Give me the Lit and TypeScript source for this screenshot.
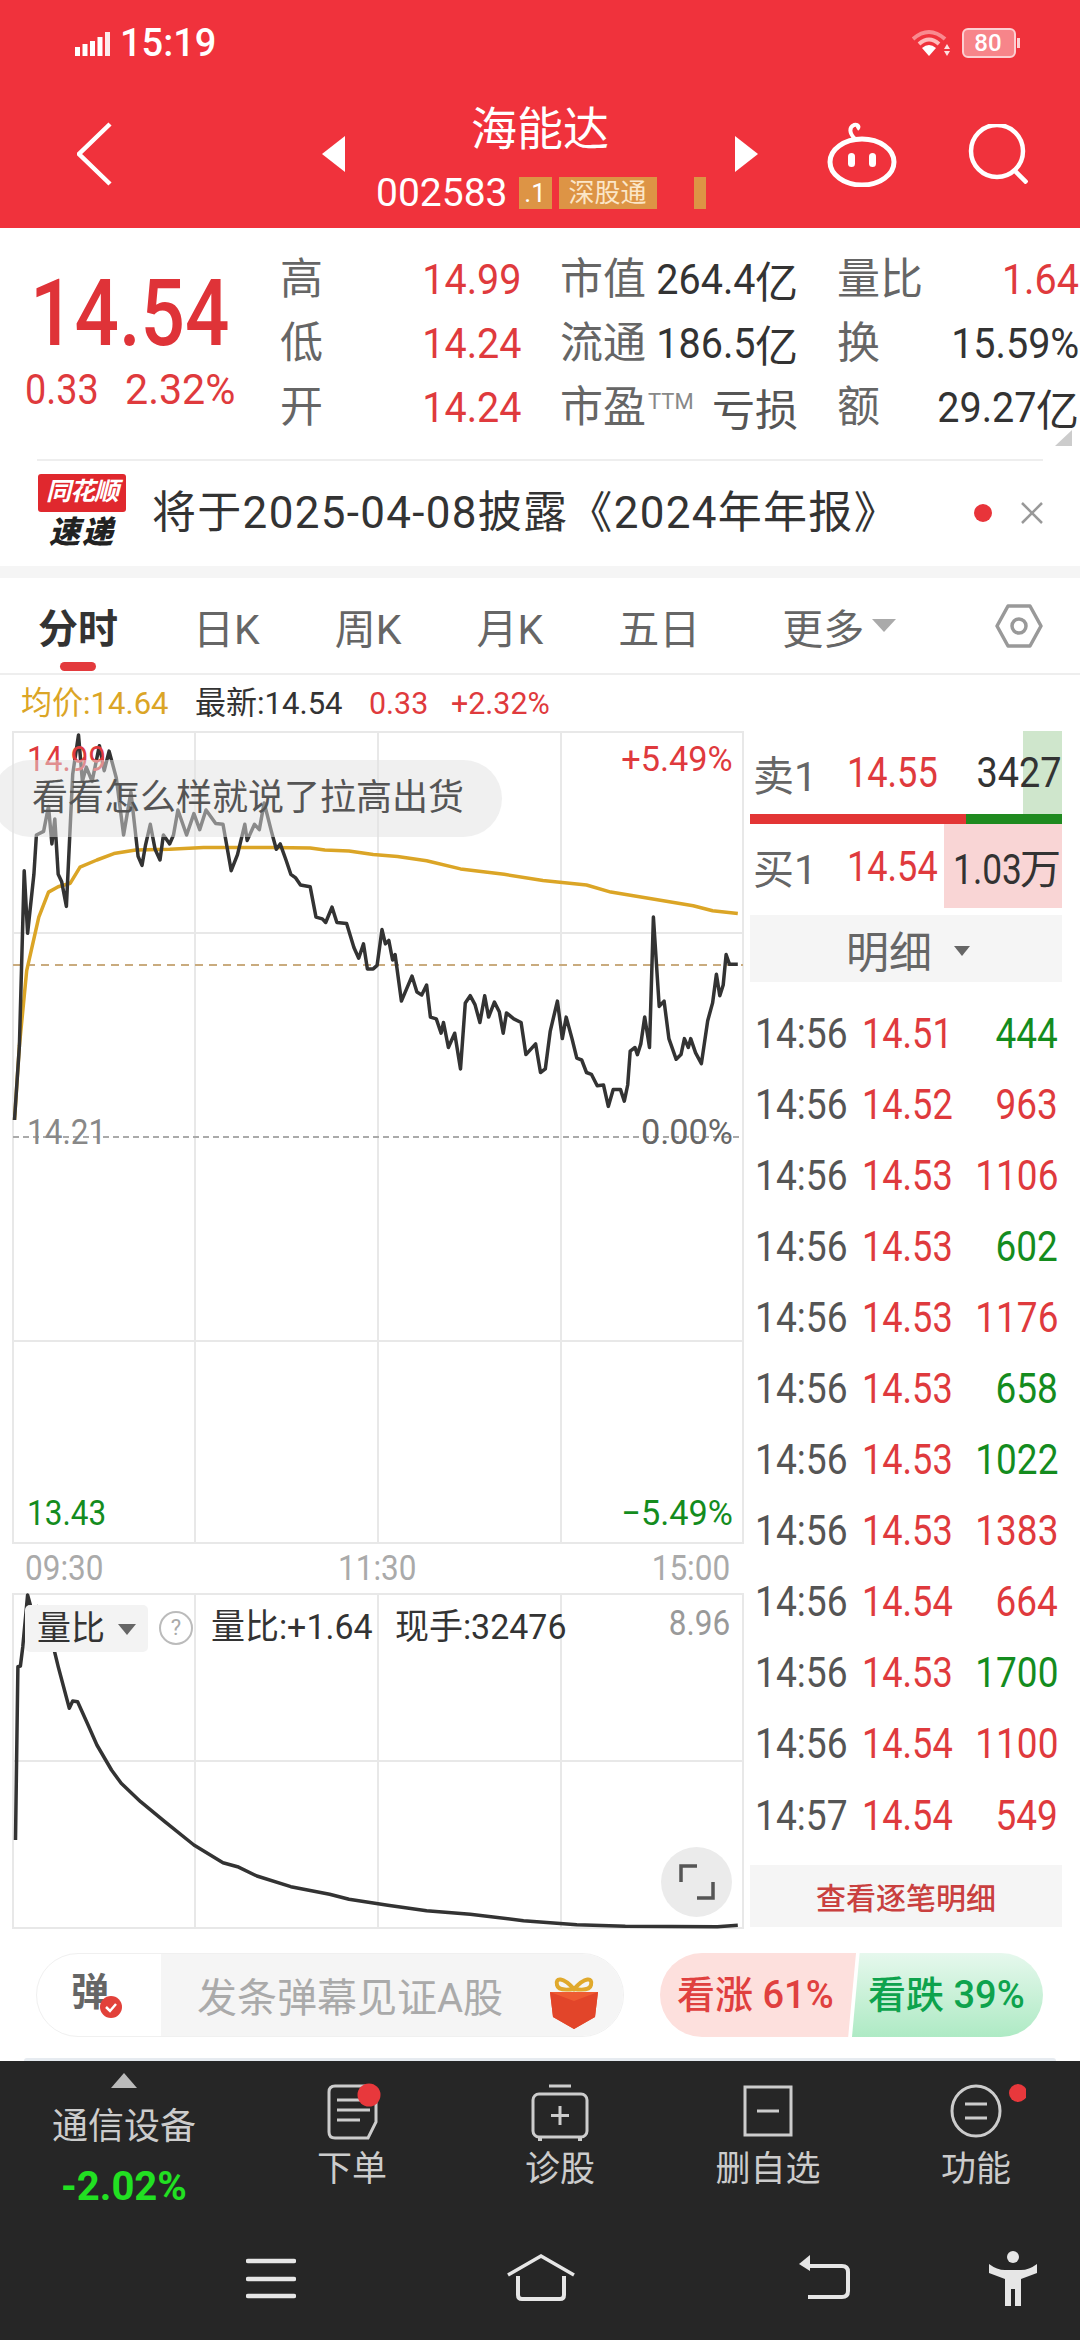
import { LitElement, html, css, svg } from "lit";
import { customElement } from "lit/decorators.js";

const price: number[][] = [[30,1568],[40,1360],[50,870],[57,1045],[70,880],[75,770],[90,760],[100,690],[107,795],[113,725],[120,880],[127,900],[137,970],[150,600],[162,490],[170,620],[178,580],[190,620],[205,520],[215,590],[225,535],[240,610],[255,770],[270,650],[285,830],[293,855],[300,800],[310,740],[320,810],[330,840],[337,770],[350,795],[358,770],[367,700],[385,770],[400,710],[412,755],[425,700],[445,738],[460,740],[477,870],[490,825],[505,740],[510,785],[525,740],[535,755],[545,680],[560,760],[570,810],[578,795],[590,840],[600,880],[610,890],[620,910],[640,915],[652,1000],[665,1005],[672,1015],[685,972],[695,1015],[715,1018],[730,1085],[740,1115],[750,1075],[758,1145],[770,1145],[778,1135],[788,1035],[795,1075],[802,1065],[810,1120],[815,1105],[828,1235],[850,1165],[860,1210],[870,1218],[880,1190],[888,1280],[900,1285],[910,1325],[915,1295],[925,1365],[938,1325],[950,1425],[960,1240],[970,1220],[980,1245],[990,1295],[1000,1220],[1008,1280],[1020,1238],[1030,1265],[1038,1325],[1045,1268],[1060,1285],[1075,1295],[1085,1385],[1105,1355],[1115,1435],[1125,1425],[1135,1320],[1150,1235],[1160,1340],[1168,1280],[1180,1340],[1190,1395],[1200,1400],[1210,1435],[1220,1440],[1232,1472],[1245,1470],[1255,1530],[1265,1483],[1280,1483],[1288,1515],[1295,1470],[1300,1375],[1310,1365],[1315,1385],[1322,1355],[1330,1280],[1340,1365],[1348,1000],[1360,1250],[1370,1235],[1380,1340],[1395,1398],[1405,1385],[1412,1340],[1420,1365],[1425,1340],[1435,1380],[1447,1410],[1460,1290],[1470,1240],[1478,1160],[1485,1220],[1492,1190],[1498,1105],[1505,1132],[1522,1132]];
const avg: number[][] = [[30,1568],[40,1360],[55,1150],[65,1090],[80,1000],[100,930],[120,915],[145,905],[165,860],[200,840],[235,822],[280,812],[350,810],[420,805],[560,805],[640,806],[670,812],[720,815],[770,825],[820,830],[880,842],[950,865],[1040,880],[1120,897],[1210,910],[1260,930],[1350,950],[1430,968],[1470,982],[1522,990]];
const ratio: number[][] = [[32,1020],[37,500],[42,498],[47,440],[57,285],[68,345],[78,320],[90,340],[105,410],[120,500],[143,625],[150,603],[160,605],[180,670],[200,735],[230,810],[250,850],[290,905],[340,965],[400,1035],[460,1088],[490,1100],[530,1128],[600,1160],[680,1183],[720,1198],[800,1216],[880,1232],[970,1243],[1080,1262],[1190,1274],[1290,1279],[1480,1280],[1522,1276]];

const mapA = (p: number[][]) => p.map(([x, y]) => `${(x / 2.063).toFixed(1)},${(560 + y / 2.8).toFixed(1)}`).join(" ");
const mapB = (p: number[][]) => p.map(([x, y]) => `${(x / 2.063).toFixed(1)},${(1500 + y / 3).toFixed(1)}`).join(" ");

const trades: [string, string, string, boolean][] = [
  ["14:56", "14.51", "444", false], ["14:56", "14.52", "963", true], ["14:56", "14.53", "1106", true],
  ["14:56", "14.53", "602", false], ["14:56", "14.53", "1176", true], ["14:56", "14.53", "658", false],
  ["14:56", "14.53", "1022", false], ["14:56", "14.53", "1383", true], ["14:56", "14.54", "664", true],
  ["14:56", "14.53", "1700", false], ["14:56", "14.54", "1100", true], ["14:57", "14.54", "549", true],
];

@customElement("app-root")
export class AppRoot extends LitElement {
  static styles = css`
    :host { display: block; width: 1080px; height: 2340px; overflow: hidden; position: relative; background: #fff;
      font-family: Roboto, "Noto Sans CJK SC", sans-serif; color: #333; }
    .n { display: inline-block; transform: scaleX(.9); transform-origin: left center; white-space: nowrap; }
    .nr { display: inline-block; transform: scaleX(.9); transform-origin: right center; white-space: nowrap; }
    .red { color: #df3a3d; } .grn { color: #148c1e; } .gray { color: #666; }

    header { height: 228px; background: #f0323c; color: #fff; display: flex; flex-direction: column; }
    .status { height: 80px; display: flex; align-items: center; padding: 5px 60px 0 75px; box-sizing: border-box; }
    .time { font-size: 38px; font-weight: 500; margin-left: 10px; line-height: 1; }
    .status .sp { flex: 1; }
    .batt { position: relative; width: 58px; height: 30px; margin-left: 10px; }
    .batt span { position: absolute; inset: 0; width: 52px; text-align: center; font-size: 24px; font-weight: 500; line-height: 30px; }
    .nav { display: flex; align-items: center; height: 148px; padding-left: 77px; }
    .nav svg { flex: none; display: block; }
    .tri-l { margin-left: 210px; }
    .tri-r { margin-right: 69px; }
    .srch { margin-left: 71px; }
    .mid { width: 390px; height: 148px; display: flex; flex-direction: column; align-items: center; padding-top: 19px; box-sizing: border-box; }
    .title { font-size: 46px; line-height: 60px; height: 60px; }
    .code { align-self: flex-start; margin-left: 31px; margin-top: 14px; display: flex; align-items: center; height: 40px; font-size: 39px; }
    .tag { background: #dd9445; color: #fbe6c8; font-size: 26px; height: 32px; line-height: 32px; text-align: center; }
    .t1 { width: 33px; margin-left: 11px; color: #fff; }
    .t2 { width: 98px; margin-left: 7px; }
    .t3 { width: 12px; margin-left: 37px; }

    .quote { height: 231px; box-sizing: border-box; padding-top: 19px; display: flex; position: relative; }
    .qleft { width: 280px; flex: none; padding-left: 30px; box-sizing: border-box; }
    .big { font-size: 92px; font-weight: 500; color: #df3338; line-height: 92px; height: 92px; margin-top: 21px; display: block; }
    .big .n { transform: scaleX(.85); }
    .sub { font-size: 42px; color: #df3a3d; line-height: 60px; margin-left: -5px; margin-top: 0; display: flex; }
    .sub .b { margin-left: 18px; transform: scaleX(.98); }
    .grid { display: grid; grid-template-columns: 241px 238px 242px; column-gap: 39px; grid-auto-rows: 64px; font-size: 42px; }
    .cell { display: flex; justify-content: space-between; align-items: center; white-space: nowrap; }
    .lab { color: #666; font-size: 43px; line-height: 64px; }
    .val { color: #333; display: flex; align-items: center; }
    .val.red { color: #df3a3d; }
    .val .nr { transform: scaleX(.94); }
    .val .cn { font-size: 43px; }
    .tm { font-size: 22px; color: #888; align-self: flex-start; margin: 14px 0 0 2px; }
    .ks { flex: 1; display: flex; align-items: center; }
    .kui { color: #555; font-size: 43px; }
    .corner { position: absolute; right: 8px; bottom: 13px; width: 0; height: 0; border-left: 17px solid transparent; border-bottom: 16px solid #ccc; }
    .news { margin: 0 37px; border-top: 2px solid #eee; height: 100px; padding-top: 5px; display: flex; align-items: center; box-sizing: border-box; }
    .logo { width: 90px; flex: none; display: flex; flex-direction: column; align-items: center; height: 78px; }
    .lg1 { background: #e0282e; color: #fff; font-size: 25px; font-weight: 700; font-style: italic; width: 88px; height: 38px; line-height: 36px; text-align: center; border-radius: 3px; white-space: nowrap; letter-spacing: -1px; }
    .lg2 { font-size: 31px; line-height: 36px; font-weight: 900; font-style: italic; color: #222; margin-top: 3px; letter-spacing: 2px; }
    .ntxt { margin-left: 25px; font-size: 44px; letter-spacing: 1.3px; color: #333; white-space: nowrap; flex: 1; line-height: 60px; }
    .dot { width: 18px; height: 18px; border-radius: 50%; background: #e8343a; flex: none; margin-right: 28px; }
    .x { flex: none; display: block; margin-right: -1px; }
    .band { margin-top: 7px; height: 12px; background: #f5f5f5; }
    .tabs { height: 97px; box-sizing: border-box; border-bottom: 2px solid #eee; display: flex; align-items: center; padding-left: 38px; gap: 75px; font-size: 41px; color: #666; position: relative; }
    .tabs .on { font-weight: 700; color: #333; font-size: 40px; position: relative; }
    .tabs .on::after { content: ""; position: absolute; left: 22px; width: 36px; height: 9px; border-radius: 5px; background: #e33a3d; bottom: -16px; }
    .more { display: flex; align-items: center; margin-left: 7px; gap: 8px; }
    .more i { width: 0; height: 0; border-left: 12px solid transparent; border-right: 12px solid transparent; border-top: 13px solid #aaa; }
    .hex { position: absolute; left: 995px; top: 24px; }
    .stats { height: 56px; display: flex; align-items: center; padding-left: 21px; font-size: 32px; line-height: 1; white-space: nowrap; }
    .st1 { color: #dba526; width: 174px; } .st2 { color: #333; width: 174px; } .st3 { width: 82px; color: #df3a3d; } .st4 { color: #df3a3d; }
    .st1 .n, .st2 .n { transform: scaleX(.97); }
    .st3 .n, .st4 .n { transform: scaleX(.95); }

    .main { height: 1199px; display: flex; }
    .chart { width: 750px; flex: none; position: relative; height: 1199px; }
    .chart svg { position: absolute; left: 0; top: 0; display: block; }
    .lb { position: absolute; font-size: 35px; line-height: 40px; white-space: nowrap; }
    .lb .nr.w { transform: scaleX(.98); }
    .a-hi { left: 27px; top: 9px; color: #df3a3d; }
    .a-up { right: 17px; top: 9px; color: #df3a3d; text-align: right; }
    .a-mid { left: 27px; top: 382px; color: #888; }
    .a-zero { right: 17px; top: 382px; color: #666; text-align: right; }
    .a-lo { left: 27px; top: 763px; color: #148c1e; }
    .a-dn { right: 17px; top: 763px; color: #148c1e; text-align: right; }
    .a-t1 { left: 25px; top: 818px; color: #aaa; }
    .a-t2 { left: 338px; top: 818px; color: #aaa; }
    .a-t3 { right: 20px; top: 818px; color: #aaa; text-align: right; }
    .a-max { right: 20px; top: 873px; color: #999; text-align: right; }
    .bubble { position: absolute; left: -8px; top: 29px; width: 510px; height: 77px; border-radius: 39px; background: rgba(226,226,226,.5); color: #555; font-size: 36px; line-height: 77px; padding-left: 40px; box-sizing: border-box; white-space: nowrap; }
    .sel { position: absolute; left: 25px; top: 874px; width: 123px; height: 47px; background: #f3f3f3; border-radius: 5px; font-size: 34px; line-height: 47px; padding-left: 12px; box-sizing: border-box; color: #333; }
    .sel i { position: absolute; left: 93px; top: 19px; width: 0; height: 0; border-left: 9px solid transparent; border-right: 9px solid transparent; border-top: 11px solid #666; }
    .qm { position: absolute; left: 159px; top: 880px; width: 34px; height: 34px; border-radius: 50%; border: 2px solid #bbb; box-sizing: border-box; color: #aaa; font-size: 22px; line-height: 30px; text-align: center; }
    .rinfo { position: absolute; left: 211px; top: 877px; font-size: 35px; line-height: 40px; white-space: nowrap; color: #333; }
    .rinfo2 { left: 395px; }
    .rinfo .n { transform: scaleX(.97); }
    .full { position: absolute; left: 661px; top: 1116px; width: 71px; height: 70px; border-radius: 50%; background: #ebebeb; display: flex; align-items: center; justify-content: center; }
    .full svg { position: static; }

    .panel { width: 312px; flex: none; display: flex; flex-direction: column; font-size: 42px; }
    .bk { display: flex; align-items: center; position: relative; white-space: nowrap; }
    .sell { height: 83px; }
    .buy { height: 84px; }
    .bk .fill-s { position: absolute; right: 0; top: 0; bottom: 0; width: 39px; background: #cfe6cc; }
    .bk .fill-b { position: absolute; right: 0; top: 0; bottom: 0; width: 118px; background: #f9d5d5; }
    .bk .k { position: relative; width: 97px; padding-left: 3px; box-sizing: border-box; color: #666; font-size: 41px; }
    .bk .p { position: relative; width: 90px; color: #df3a3d; }
    .bk .p .n { transform: scaleX(.86); }
    .bk .v { position: relative; flex: 1; text-align: right; color: #333; padding-right: 1px; }
    .bk .v .nr { transform: scaleX(.9); }
    .bk .wan { font-size: 41px; margin-left: -2px; }
    .bk .low .nr { transform: scaleX(.84); }
    .split { display: flex; height: 10px; flex: none; }
    .split b { width: 216px; background: #e33535; }
    .split u { flex: 1; background: #1f8a1f; }
    .detail { margin-top: 7px; height: 67px; background: #f5f5f5; display: flex; align-items: center; justify-content: center; color: #666; font-size: 43px; gap: 22px; padding-left: 4px; box-sizing: border-box; }
    .detail i { width: 0; height: 0; border-left: 8px solid transparent; border-right: 8px solid transparent; border-top: 10px solid #666; margin-top: 4px; }
    .list { margin-top: 16px; }
    .row { height: 71.05px; display: flex; align-items: center; white-space: nowrap; padding: 0 4px 0 5px; }
    .row .tt { width: 107px; color: #555; }
    .row .tt .n { transform: scaleX(.885); }
    .row .pp { width: 92px; color: #df3a3d; }
    .row .pp .n { transform: scaleX(.86); }
    .row .vv { flex: 1; text-align: right; }
    .row .vv .nr { transform: scaleX(.88); }
    .allbtn { margin-top: 14px; height: 62px; background: #f5f5f5; color: #c9403f; font-size: 30px; font-weight: 500; display: flex; align-items: center; justify-content: center; }

    .bar { height: 131px; padding: 23px 37px 0 36px; box-sizing: border-box; display: flex; position: relative; }
    .pill { width: 588px; height: 84px; border-radius: 42px; border: 1px solid #f0f0f0; box-sizing: border-box; overflow: hidden; display: flex; flex: none; }
    .dan { width: 124px; flex: none; position: relative; font-size: 38px; font-weight: 700; color: #666; line-height: 76px; padding-left: 34px; box-sizing: border-box; }
    .dan i { position: absolute; left: 63px; top: 42px; width: 22px; height: 22px; border-radius: 50%; background: #e2413a; }
    .dan svg { position: absolute; left: 63px; top: 42px; }
    .inp { flex: 1; background: #f5f5f5; display: flex; align-items: center; padding-left: 36px; color: #aaa; font-size: 40px; white-space: nowrap; position: relative; }
    .inp svg { position: absolute; left: 388px; top: 21px; }
    .vote { margin-left: 36px; width: 383px; height: 84px; border-radius: 42px; overflow: hidden; display: flex; font-size: 38px; font-weight: 500; white-space: nowrap; }
    .vup { width: 196px; flex: none; background: #fde0dd; color: #e0403f; line-height: 84px; padding-left: 17px; box-sizing: border-box; clip-path: polygon(0 0, 100% 0, 96% 100%, 0 100%); }
    .vdn { flex: 1; margin-left: -4px; background: linear-gradient(#e6f8ed, #aeeac4); color: #0ea34d; line-height: 84px; padding-left: 16px; clip-path: polygon(4% 0, 100% 0, 100% 100%, 0 100%); }
    .rule { position: absolute; left: 24px; right: 24px; bottom: 0; height: 3px; background: #e6ebf0; border-radius: 3px 3px 0 0; }

    footer { height: 279px; background: #262626; color: #ccc; display: flex; flex-direction: column; }
    .ftop { height: 175px; display: grid; grid-template-columns: 248px repeat(4, 208px); }
    .fl { display: flex; flex-direction: column; align-items: center; position: relative; }
    .fl i { margin-top: 12px; width: 0; height: 0; border-left: 13px solid transparent; border-right: 13px solid transparent; border-bottom: 15px solid #bbb; }
    .fl .nm { margin-top: 16px; font-size: 36px; line-height: 46px; white-space: nowrap; }
    .fl .ch { margin-top: 14px; font-size: 40px; font-weight: 700; line-height: 46px; color: #22e022; }
    .it { display: flex; flex-direction: column; align-items: center; padding-top: 20px; }
    .it svg { display: block; }
    .it span { font-size: 35px; line-height: 50px; margin-top: 4px; white-space: nowrap; }
    .fnav { padding: 15px 0 0 246px; display: flex; align-items: flex-start; }
    .fnav svg { display: block; flex: none; }
    .m1 { margin-left: 210px; } .m2 { margin-left: 222px; } .m3 { margin-left: 139px; }
  `;

  render() {
    const n = (t: string) => html`<span class="n">${t}</span>`;
    const r = (t: string) => html`<span class="nr">${t}</span>`;
    const rw = (t: string) => html`<span class="nr w">${t}</span>`;
    return html`
      <header>
        <div class="status">
          <svg width="35" height="26" viewBox="0 0 35 26"><g fill="#fff"><rect x="0" y="17" width="5" height="9"/><rect x="7.500" y="14" width="5" height="12"/><rect x="15" y="11" width="5" height="15"/><rect x="22.500" y="7" width="5" height="19"/><rect x="30" y="2" width="5" height="24" opacity=".9"/></g></svg>
          <span class="time">15:19</span>
          <span class="sp"></span>
          <svg width="40" height="28" viewBox="0 0 40 28"><path d="M1 10 Q17 -4 33 10" stroke="#f98a8f" stroke-width="4" fill="none"/><path d="M7 15 Q17 6 27 15" stroke="#fbb" stroke-width="4" fill="none"/><path d="M17 27 L10 19 Q17 13 24 19Z" fill="#fff"/><path d="M35 15l3 5h-6zM35 27l3-5h-6z" fill="#fde0e0"/></svg>
          <div class="batt">
            <svg width="58" height="30" viewBox="0 0 58 30"><rect x="1" y="1" width="52" height="28" rx="5" fill="#f7858a" stroke="#fcd0d2" stroke-width="2"/><rect x="55" y="10" width="3" height="10" fill="#fcd0d2"/></svg>
            <span>80</span>
          </div>
        </div>
        <div class="nav">
          <svg width="35" height="64" viewBox="0 0 35 64"><path d="M33 2 L2 32 L33 62" fill="none" stroke="#fff" stroke-width="4.500"/></svg>
          <svg class="tri-l" width="23" height="36" viewBox="0 0 23 36"><path d="M23 0V36L0 18Z" fill="#fff"/></svg>
          <div class="mid">
            <div class="title">海能达</div>
            <div class="code"><span>002583</span><span class="tag t1">.1</span><span class="tag t2">深股通</span><span class="tag t3"></span></div>
          </div>
          <svg class="tri-r" width="23" height="36" viewBox="0 0 23 36"><path d="M0 0V36L23 18Z" fill="#fff"/></svg>
          <svg width="70" height="66" viewBox="0 0 70 66"><path d="M28 18 C22 12 22 6 27 4 C31 3 33 6 30 8" fill="none" stroke="#fff" stroke-width="4"/><ellipse cx="35" cy="41" rx="32" ry="23" fill="none" stroke="#fff" stroke-width="5"/><rect x="21" y="32" width="7" height="14" rx="3.500" fill="#fff"/><rect x="42" y="32" width="7" height="14" rx="3.500" fill="#fff"/></svg>
          <svg class="srch" width="60" height="60" viewBox="0 0 60 60"><circle cx="29" cy="27" r="26" fill="none" stroke="#fff" stroke-width="4.500"/><path d="M46 46 L59 59" stroke="#fff" stroke-width="4.500"/></svg>
        </div>
      </header>

      <section class="quote">
        <div class="qleft">
          <div class="big">${n("14.54")}</div>
          <div class="sub">${n("0.33")}<span class="n b">2.32%</span></div>
        </div>
        <div class="grid">
          <div class="cell"><span class="lab">高</span><span class="val red">${r("14.99")}</span></div>
          <div class="cell"><span class="lab">市值</span><span class="val">${r("264.4")}<span class="cn">亿</span></span></div>
          <div class="cell"><span class="lab">量比</span><span class="val red">${r("1.64")}</span></div>
          <div class="cell"><span class="lab">低</span><span class="val red">${r("14.24")}</span></div>
          <div class="cell"><span class="lab">流通</span><span class="val">${r("186.5")}<span class="cn">亿</span></span></div>
          <div class="cell"><span class="lab">换</span><span class="val">${r("15.59%")}</span></div>
          <div class="cell"><span class="lab">开</span><span class="val red">${r("14.24")}</span></div>
          <div class="cell"><span class="ks"><span class="lab">市盈</span><span class="tm">TTM</span></span><span class="kui">亏损</span></div>
          <div class="cell"><span class="lab">额</span><span class="val">${r("29.27")}<span class="cn">亿</span></span></div>
        </div>
        <span class="corner"></span>
      </section>

      <section class="news">
        <div class="logo"><div class="lg1">同花顺</div><div class="lg2">速递</div></div>
        <div class="ntxt">将于2025-04-08披露《2024年年报》</div>
        <span class="dot"></span>
        <svg class="x" width="24" height="24" viewBox="0 0 24 24"><path d="M2 2 L22 22 M22 2 L2 22" stroke="#999" stroke-width="2.500"/></svg>
      </section>
      <div class="band"></div>

      <nav class="tabs">
        <span class="on">分时</span><span>日K</span><span>周K</span><span>月K</span><span>五日</span>
        <span class="more">更多<i></i></span>
        <svg class="hex" width="48" height="48" viewBox="0 0 48 48"><path d="M13 4 H35 L46 24 L35 44 H13 L2 24Z" fill="none" stroke="#999" stroke-width="3.500" stroke-linejoin="round"/><circle cx="24" cy="24" r="7" fill="none" stroke="#999" stroke-width="3.500"/></svg>
      </nav>
      <div class="stats">
        <span class="st1">${n("均价:14.64")}</span><span class="st2">${n("最新:14.54")}</span><span class="st3">${n("0.33")}</span><span class="st4">${n("+2.32%")}</span>
      </div>

      <div class="main">
        <div class="chart">
          <svg width="750" height="1199" viewBox="0 731 750 1199">
            ${svg`<g fill="none" stroke="#e8e8e8" stroke-width="2">
              <rect x="13" y="732" width="730" height="811"/>
              <path d="M195 732V1543M378 732V1543M561 732V1543M13 933H743M13 1341H743"/>
              <rect x="13" y="1594" width="730" height="334"/>
              <path d="M195 1594V1928M378 1594V1928M561 1594V1928M13 1761H743"/>
            </g>
            <path d="M13 965H743" stroke="#c9ab7e" stroke-width="2" stroke-dasharray="8 6" fill="none"/>
            <path d="M13 1137H743" stroke="#aaa" stroke-width="2" stroke-dasharray="6 4" fill="none"/>
            <polyline points="${mapA(avg)}" fill="none" stroke="#dba526" stroke-width="3.500" stroke-linejoin="round"/>
            <polyline points="${mapA(price)}" fill="none" stroke="#333" stroke-width="3.500" stroke-linejoin="round"/>
            <polyline points="${mapB(ratio)}" fill="none" stroke="#333" stroke-width="3.500" stroke-linejoin="round"/>`}
          </svg>
          <span class="lb a-hi">${n("14.99")}</span>
          <span class="lb a-up">${rw("+5.49%")}</span>
          <span class="lb a-mid">${n("14.21")}</span>
          <span class="lb a-zero">${rw("0.00%")}</span>
          <span class="lb a-lo">${n("13.43")}</span>
          <span class="lb a-dn">${rw("−5.49%")}</span>
          <span class="lb a-t1">${n("09:30")}</span>
          <span class="lb a-t2">${n("11:30")}</span>
          <span class="lb a-t3">${r("15:00")}</span>
          <span class="lb a-max">${r("8.96")}</span>
          <div class="bubble">看看怎么样就说了拉高出货</div>
          <div class="sel">量比<i></i></div>
          <div class="qm">?</div>
          <span class="rinfo">${n("量比:+1.64")}</span>
          <span class="rinfo rinfo2">${n("现手:32476")}</span>
          <div class="full"><svg width="40" height="40" viewBox="0 0 40 40"><path d="M4 20V4H20M36 20V36H20" fill="none" stroke="#555" stroke-width="3.500"/></svg></div>
        </div>
        <div class="panel">
          <div class="bk sell"><span class="fill-s"></span><span class="k">卖1</span><span class="p">${n("14.55")}</span><span class="v">${r("3427")}</span></div>
          <div class="split"><b></b><u></u></div>
          <div class="bk buy"><span class="fill-b"></span><span class="k">买1</span><span class="p">${n("14.54")}</span><span class="v low">${r("1.03")}<span class="wan">万</span></span></div>
          <div class="detail">明细<i></i></div>
          <div class="list">
            ${trades.map(([t, p, v, up]) => html`<div class="row"><span class="tt">${n(t)}</span><span class="pp">${n(p)}</span><span class="vv ${up ? "red" : "grn"}">${r(v)}</span></div>`)}
          </div>
          <div class="allbtn">查看逐笔明细</div>
        </div>
      </div>

      <div class="bar">
        <div class="pill">
          <div class="dan">弹<i></i><svg width="22" height="22" viewBox="0 0 22 22"><path d="M6 11l4 4 6-7" fill="none" stroke="#fff" stroke-width="2.500"/></svg></div>
          <div class="inp">发条弹幕见证A股
            <svg width="50" height="54" viewBox="0 0 50 54"><path d="M25 14 C14 2 6 2 8 10 C9 15 18 15 25 14 C32 15 41 15 42 10 C44 2 36 2 25 14Z" fill="none" stroke="#e0a92c" stroke-width="4"/><path d="M1 17 H49 L46 42 L25 54 L4 42Z" fill="#ee5a32"/><path d="M1 17 L25 26 L49 17 L46 42 L25 54 L4 42Z" fill="#e2452a"/></svg>
          </div>
        </div>
        <div class="vote"><div class="vup">看涨 61%</div><div class="vdn">看跌 39%</div></div>
        <span class="rule"></span>
      </div>

      <footer>
        <div class="ftop">
          <div class="fl"><i></i><span class="nm">通信设备</span><span class="ch">-2.02%</span></div>
          <div class="it">
            <svg width="60" height="60" viewBox="0 0 60 60"><path d="M13 5 H46 Q54 5 54 12 V41 L46 57 H13 Q7 57 7 51 V11 Q7 5 13 5Z" fill="none" stroke="#ccc" stroke-width="3"/><path d="M15 19H44M15 29H48M15 39H38" stroke="#ccc" stroke-width="3"/><circle cx="47" cy="14" r="11.500" fill="#e8383c"/></svg>
            <span>下单</span>
          </div>
          <div class="it">
            <svg width="60" height="60" viewBox="0 0 60 60"><path d="M19 5H41" stroke="#ccc" stroke-width="3"/><rect x="3" y="13" width="54" height="43" rx="6" fill="none" stroke="#ccc" stroke-width="3"/><path d="M30 25V44M21 34.500H39" stroke="#ccc" stroke-width="3"/><path d="M10 57v3M50 57v3" stroke="#ccc" stroke-width="4"/></svg>
            <span>诊股</span>
          </div>
          <div class="it">
            <svg width="60" height="60" viewBox="0 0 60 60"><rect x="7" y="6" width="46" height="48" fill="none" stroke="#ccc" stroke-width="3"/><path d="M19 30H41" stroke="#ccc" stroke-width="3"/></svg>
            <span>删自选</span>
          </div>
          <div class="it">
            <svg width="100" height="60" viewBox="-20 0 100 60"><ellipse cx="30" cy="30" rx="24" ry="25" fill="none" stroke="#ccc" stroke-width="3"/><path d="M19 23H41M19 37H41" stroke="#ccc" stroke-width="3"/><ellipse cx="72" cy="12" rx="9" ry="9" fill="#e8383c"/></svg>
            <span>功能</span>
          </div>
        </div>
        <div class="fnav">
          <svg width="50" height="55" viewBox="0 0 50 55"><path d="M2 10H48M2 28H48M2 45H48" stroke="#e6e6e6" stroke-width="4.500" stroke-linecap="round"/></svg>
          <svg class="m1" width="70" height="55" viewBox="0 0 70 55"><path d="M2 24 L35 5 L68 24" fill="none" stroke="#e6e6e6" stroke-width="3.500"/><path d="M12 25V44Q12 48 16 48H54Q58 48 58 44V25" fill="none" stroke="#e6e6e6" stroke-width="4"/></svg>
          <svg class="m2" width="52" height="55" viewBox="0 0 52 55"><path d="M8 15H44Q50 15 50 21V40Q50 46 44 46H10" fill="none" stroke="#e6e6e6" stroke-width="4"/><path d="M12 4V20L1 13Z" fill="#e6e6e6"/></svg>
          <svg class="m3" width="48" height="55" viewBox="0 0 48 55"><circle cx="24" cy="6" r="6" fill="#e6e6e6"/><path d="M0 13 Q8 19 16 19 H32 Q40 19 48 13 L48 22 L32 28 V38 H16 V28 L0 22Z" fill="#e6e6e6"/><path d="M16 38H22V55H16ZM26 38H32V55H26Z" fill="#e6e6e6"/></svg>
        </div>
      </footer>
    `;
  }
}
